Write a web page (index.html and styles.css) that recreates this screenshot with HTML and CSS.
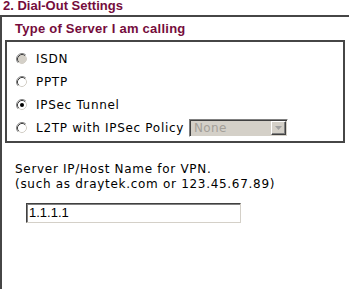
FILE: index.html
```html
<!DOCTYPE html>
<html>
<head>
<meta charset="utf-8">
<link rel="stylesheet" href="styles.css">
</head>
<body>
<div class="title">2. Dial-Out Settings</div>
<div class="panel">
  <div class="subtitle">Type of Server I am calling</div>
  <div class="group">
    <div class="row">
      <svg class="radio" width="12" height="12" viewBox="0 0 12 12"><circle cx="6" cy="6" r="4.5" fill="#d4d0c8"/><path d="M9.89 2.11A5.5 5.5 0 0 0 2.11 9.89" fill="none" stroke="#808080"/><path d="M2.11 9.89A5.5 5.5 0 0 0 9.89 2.11" fill="none" stroke="#ffffff"/><path d="M9.18 2.82A4.5 4.5 0 0 0 2.82 9.18" fill="none" stroke="#404040"/><path d="M2.82 9.18A4.5 4.5 0 0 0 9.18 2.82" fill="none" stroke="#d4d0c8"/></svg>
      <span class="label">ISDN</span>
    </div>
    <div class="row">
      <svg class="radio" width="12" height="12" viewBox="0 0 12 12"><circle cx="6" cy="6" r="4.5" fill="#fff"/><path d="M9.89 2.11A5.5 5.5 0 0 0 2.11 9.89" fill="none" stroke="#808080"/><path d="M2.11 9.89A5.5 5.5 0 0 0 9.89 2.11" fill="none" stroke="#ffffff"/><path d="M9.18 2.82A4.5 4.5 0 0 0 2.82 9.18" fill="none" stroke="#404040"/><path d="M2.82 9.18A4.5 4.5 0 0 0 9.18 2.82" fill="none" stroke="#d4d0c8"/></svg>
      <span class="label">PPTP</span>
    </div>
    <div class="row">
      <svg class="radio" width="12" height="12" viewBox="0 0 12 12"><circle cx="6" cy="6" r="4.5" fill="#fff"/><path d="M9.89 2.11A5.5 5.5 0 0 0 2.11 9.89" fill="none" stroke="#808080"/><path d="M2.11 9.89A5.5 5.5 0 0 0 9.89 2.11" fill="none" stroke="#ffffff"/><path d="M9.18 2.82A4.5 4.5 0 0 0 2.82 9.18" fill="none" stroke="#404040"/><path d="M2.82 9.18A4.5 4.5 0 0 0 9.18 2.82" fill="none" stroke="#d4d0c8"/><circle cx="6" cy="6" r="2" fill="#000"/></svg>
      <span class="label">IPSec Tunnel</span>
    </div>
    <div class="row">
      <svg class="radio" width="12" height="12" viewBox="0 0 12 12"><circle cx="6" cy="6" r="4.5" fill="#fff"/><path d="M9.89 2.11A5.5 5.5 0 0 0 2.11 9.89" fill="none" stroke="#808080"/><path d="M2.11 9.89A5.5 5.5 0 0 0 9.89 2.11" fill="none" stroke="#ffffff"/><path d="M9.18 2.82A4.5 4.5 0 0 0 2.82 9.18" fill="none" stroke="#404040"/><path d="M2.82 9.18A4.5 4.5 0 0 0 9.18 2.82" fill="none" stroke="#d4d0c8"/></svg>
      <span class="label">L2TP with IPSec Policy</span>
      <span class="select"><span class="select-text">None</span><span class="select-btn"><svg width="7" height="4" viewBox="0 0 7 4"><path d="M0 0h7L3.5 4z" fill="#a0a0a0"/></svg></span></span>
    </div>
  </div>
  <div class="server">
    <div class="line">Server IP/Host Name for VPN.</div>
    <div class="line">(such as draytek.com or 123.45.67.89)</div>
    <div class="input">1.1.1.1</div>
  </div>
</div>
</body>
</html>
```
FILE: styles.css
```css
html, body { margin: 0; padding: 0; background: #fff; }
body { font-family: "DejaVu Sans", Verdana, sans-serif; font-size: 12px; color: #000; width: 349px; height: 289px; overflow: hidden; }
.title { font-family: "Liberation Sans", Arial, sans-serif; font-weight: bold; color: #750c3c; font-size: 13px; height: 15px; line-height: 11px; padding-left: 3px; }
.panel { border-top: 2px solid #464646; border-left: 2px solid #464646; height: 280px; }
.subtitle { font-family: "Liberation Sans", Arial, sans-serif; font-weight: bold; color: #750c3c; font-size: 13px; letter-spacing: 0.25px; line-height: 23px; height: 23px; padding-left: 13px; }
.group { margin-left: 3px; width: 340px; box-sizing: border-box; border: 2px solid #464646; padding: 5px 0 2px 9px; }
.row { display: flex; align-items: center; height: 23px; }
.radio { flex: none; display: block; }
.label { margin-left: 8px; letter-spacing: 0.7px; white-space: nowrap; }
.select { margin-left: 5px; width: 99px; height: 18px; box-sizing: border-box; background: #d4d0c8; border: 1px solid; border-color: #808080 #fff #fff #808080; box-shadow: inset 1px 1px 0 #404040; display: flex; align-items: center; }
.select-text { color: #a39f98; padding-left: 4px; flex: 1; letter-spacing: 0.3px; }
.select-btn { width: 15px; height: 14px; margin-right: 1px; box-sizing: border-box; border: 1px solid; border-color: #fff #404040 #404040 #fff; box-shadow: inset -1px -1px 0 #808080; display: flex; align-items: center; justify-content: center; background: #d4d0c8; }
.server { padding-left: 13px; padding-top: 19px; }
.line { line-height: 15px; letter-spacing: 0.7px; white-space: nowrap; }
.input { margin-top: 11px; margin-left: 11px; width: 215px; height: 20px; box-sizing: border-box; border: 1px solid; border-color: #404040 #d4d0c8 #d4d0c8 #404040; box-shadow: inset 1px 1px 0 #808080; padding-left: 2px; line-height: 18px; font-family: "Liberation Sans", Arial, sans-serif; font-size: 13px; }
```
